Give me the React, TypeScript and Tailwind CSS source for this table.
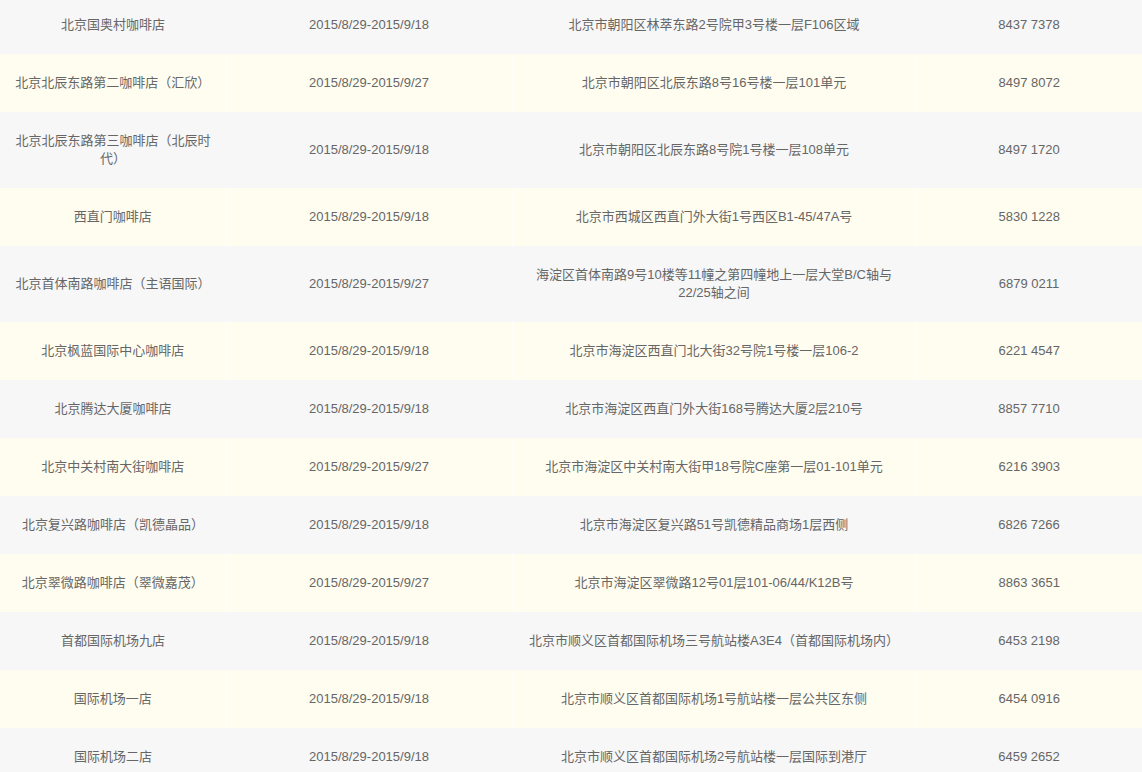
import React from 'react'

type Store = {
  name: string
  period: string
  address: string
  phone: string
}

const stores: Store[] = [
  { name: '北京国奥村咖啡店', period: '2015/8/29-2015/9/18', address: '北京市朝阳区林萃东路2号院甲3号楼一层F106区域', phone: '8437 7378' },
  { name: '北京北辰东路第二咖啡店（汇欣）', period: '2015/8/29-2015/9/27', address: '北京市朝阳区北辰东路8号16号楼一层101单元', phone: '8497 8072' },
  { name: '北京北辰东路第三咖啡店（北辰时代）', period: '2015/8/29-2015/9/18', address: '北京市朝阳区北辰东路8号院1号楼一层108单元', phone: '8497 1720' },
  { name: '西直门咖啡店', period: '2015/8/29-2015/9/18', address: '北京市西城区西直门外大街1号西区B1-45/47A号', phone: '5830 1228' },
  { name: '北京首体南路咖啡店（主语国际）', period: '2015/8/29-2015/9/27', address: '海淀区首体南路9号10楼等11幢之第四幢地上一层大堂B/C轴与22/25轴之间', phone: '6879 0211' },
  { name: '北京枫蓝国际中心咖啡店', period: '2015/8/29-2015/9/18', address: '北京市海淀区西直门北大街32号院1号楼一层106-2', phone: '6221 4547' },
  { name: '北京腾达大厦咖啡店', period: '2015/8/29-2015/9/18', address: '北京市海淀区西直门外大街168号腾达大厦2层210号', phone: '8857 7710' },
  { name: '北京中关村南大街咖啡店', period: '2015/8/29-2015/9/27', address: '北京市海淀区中关村南大街甲18号院C座第一层01-101单元', phone: '6216 3903' },
  { name: '北京复兴路咖啡店（凯德晶品）', period: '2015/8/29-2015/9/18', address: '北京市海淀区复兴路51号凯德精品商场1层西侧', phone: '6826 7266' },
  { name: '北京翠微路咖啡店（翠微嘉茂）', period: '2015/8/29-2015/9/27', address: '北京市海淀区翠微路12号01层101-06/44/K12B号', phone: '8863 3651' },
  { name: '首都国际机场九店', period: '2015/8/29-2015/9/18', address: '北京市顺义区首都国际机场三号航站楼A3E4（首都国际机场内）', phone: '6453 2198' },
  { name: '国际机场一店', period: '2015/8/29-2015/9/18', address: '北京市顺义区首都国际机场1号航站楼一层公共区东侧', phone: '6454 0916' },
  { name: '国际机场二店', period: '2015/8/29-2015/9/18', address: '北京市顺义区首都国际机场2号航站楼一层国际到港厅', phone: '6459 2652' },
]

const App = () => {
  return (
    <div className="w-[1142px] h-[772px] overflow-hidden bg-white">
      <table
        className="-mt-[4px] w-[1142px] table-fixed border-collapse text-[13px] leading-[18px] text-[#666666] text-center"
        style={{ fontFamily: '"Liberation Sans", Arial, "Noto Sans CJK SC", sans-serif' }}
      >
        <colgroup>
          <col className="w-[226px]" />
          <col className="w-[286px]" />
          <col className="w-[404px]" />
          <col className="w-[226px]" />
        </colgroup>
        <tbody>
          {stores.map((s, i) => {
            const odd = i % 2 === 1
            const cell = odd
              ? 'px-[10px] py-[20px] align-middle border-r border-[#fffffa] last:border-r-0'
              : 'px-[10px] py-[20px] align-middle'
            return (
              <tr key={s.name} className={odd ? 'bg-[#fffdf0]' : 'bg-[#f7f7f7]'}>
                <td className={cell}>{s.name}</td>
                <td className={cell}>{s.period}</td>
                <td className={cell}>{s.address}</td>
                <td className={cell}>{s.phone}</td>
              </tr>
            )
          })}
        </tbody>
      </table>
    </div>
  )
}

export default App
